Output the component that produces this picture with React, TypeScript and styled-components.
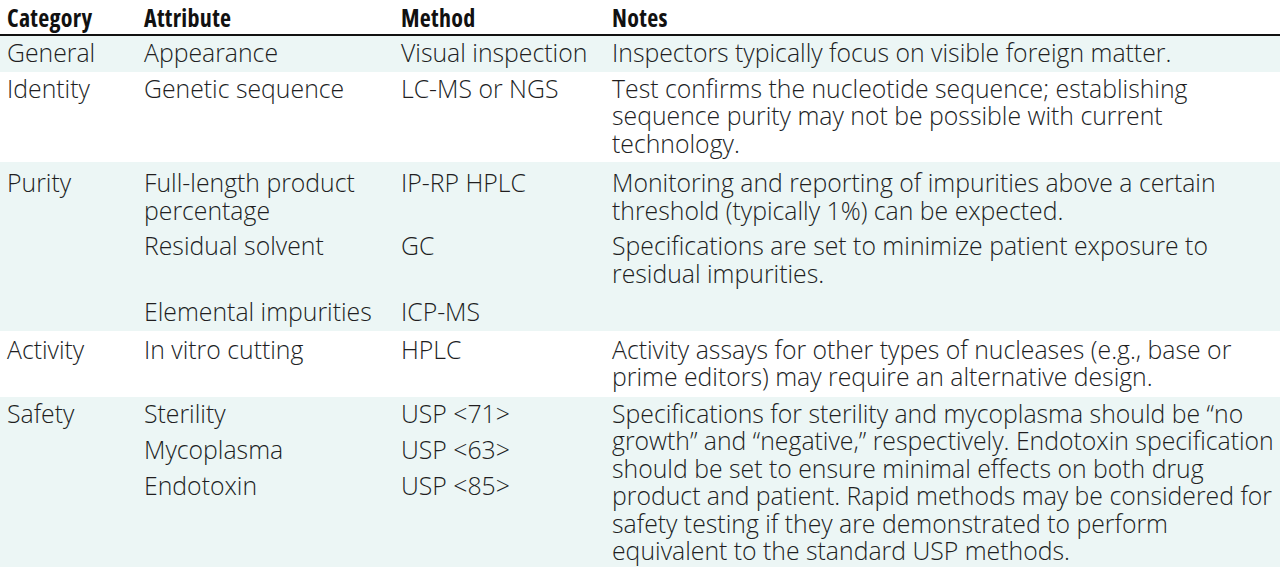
import React from "react";
import styled, { createGlobalStyle } from "styled-components";

type Sub = {
	attribute: string[];
	method: string[];
	notes?: string;
	top?: number;
	bottom?: number;
};
type Group = { category: string; shaded: boolean; rows: Sub[] };

const groups: Group[] = [
	{
		category: "General",
		shaded: true,
		rows: [
			{
				attribute: ["Appearance"],
				method: ["Visual inspection"],
				notes: "Inspectors typically focus on visible foreign matter.",
			},
		],
	},
	{
		category: "Identity",
		shaded: false,
		rows: [
			{
				attribute: ["Genetic sequence"],
				method: ["LC-MS or NGS"],
				notes:
					"Test confirms the nucleotide sequence; establishing sequence purity may not be possible with current technology.",
			},
		],
	},
	{
		category: "Purity",
		shaded: true,
		rows: [
			{
				attribute: ["Full-length product percentage"],
				method: ["IP-RP HPLC"],
				notes:
					"Monitoring and reporting of impurities above a certain threshold (typically 1%) can be expected.",
				top: 4,
			},
			{
				attribute: ["Residual solvent"],
				method: ["GC"],
				notes:
					"Specifications are set to minimize patient exposure to residual impurities.",
				bottom: 3,
			},
			{ attribute: ["Elemental impurities"], method: ["ICP-MS"], notes: "" },
		],
	},
	{
		category: "Activity",
		shaded: false,
		rows: [
			{
				attribute: ["In vitro cutting"],
				method: ["HPLC"],
				notes:
					"Activity assays for other types of nucleases (e.g., base or prime editors) may require an alternative design.",
				top: 2,
				bottom: 1,
			},
		],
	},
	{
		category: "Safety",
		shaded: true,
		rows: [
			{
				attribute: ["Sterility", "Mycoplasma", "Endotoxin"],
				method: ["USP <71>", "USP <63>", "USP <85>"],
				notes:
					"Specifications for sterility and mycoplasma should be \u201cno growth\u201d and \u201cnegative,\u201d respectively. Endotoxin specification should be set to ensure minimal effects on both drug product and patient. Rapid methods may be considered for safety testing if they are demonstrated to perform equivalent to the standard USP methods.",
			},
		],
	},
];

const App = () => {
	return (
		<>
			<GlobalStyle />
			<Table>
				<colgroup>
					<col style={{ width: 137 }} />
					<col style={{ width: 257 }} />
					<col style={{ width: 211 }} />
					<col />
				</colgroup>
				<thead>
					<tr>
						<HeadCell>Category</HeadCell>
						<HeadCell>Attribute</HeadCell>
						<HeadCell>Method</HeadCell>
						<HeadCell>Notes</HeadCell>
					</tr>
				</thead>
				<tbody>
					{groups.map((g) =>
						g.rows.map((r, i) => (
							<Row key={g.category + i} $shaded={g.shaded}>
								{i === 0 && (
									<Cell rowSpan={g.rows.length} $top={r.top}>
										{g.category}
									</Cell>
								)}
								<Cell $top={r.top} $bottom={r.bottom}>
									<Stack>
										{r.attribute.map((a) => (
											<span key={a}>{a}</span>
										))}
									</Stack>
								</Cell>
								<Cell $top={r.top} $bottom={r.bottom}>
									<Stack>
										{r.method.map((m) => (
											<span key={m}>{m}</span>
										))}
									</Stack>
								</Cell>
								<Cell $top={r.top} $bottom={r.bottom}>
									{r.notes}
								</Cell>
							</Row>
						))
					)}
				</tbody>
			</Table>
		</>
	);
};

const GlobalStyle = createGlobalStyle`
	html, body {
		margin: 0;
		padding: 0;
		background: #fff;
		overflow: hidden;
	}
	body {
		font-family: "Open Sans", "Liberation Sans", sans-serif;
		color: #211e1f;
	}
`;

const Table = styled.table`
	width: 1290px;
	table-layout: fixed;
	border-collapse: collapse;
	border-spacing: 0;
`;

const HeadCell = styled.th`
	text-align: left;
	vertical-align: bottom;
	font-weight: 700;
	font-stretch: 75%;
	font-size: 24px;
	letter-spacing: 0.3px;
	line-height: 26px;
	padding: 5px 7px 3px;
	height: 26px;
	border-bottom: 2px solid #111;
	color: #111;
`;

const Row = styled.tr<{ $shaded: boolean }>`
	background: ${(p) => (p.$shaded ? "#ecf6f5" : "#fff")};
`;

const Cell = styled.td<{ $top?: number; $bottom?: number }>`
	vertical-align: top;
	font-size: 24.8px;
	font-weight: 300;
	line-height: 27.5px;
	padding: ${(p) => 3 + (p.$top ?? 0)}px 7px ${(p) => 5 + (p.$bottom ?? 0)}px;
`;

const Stack = styled.div`
	display: flex;
	flex-direction: column;
	gap: 8.5px;
`;

export default App;
